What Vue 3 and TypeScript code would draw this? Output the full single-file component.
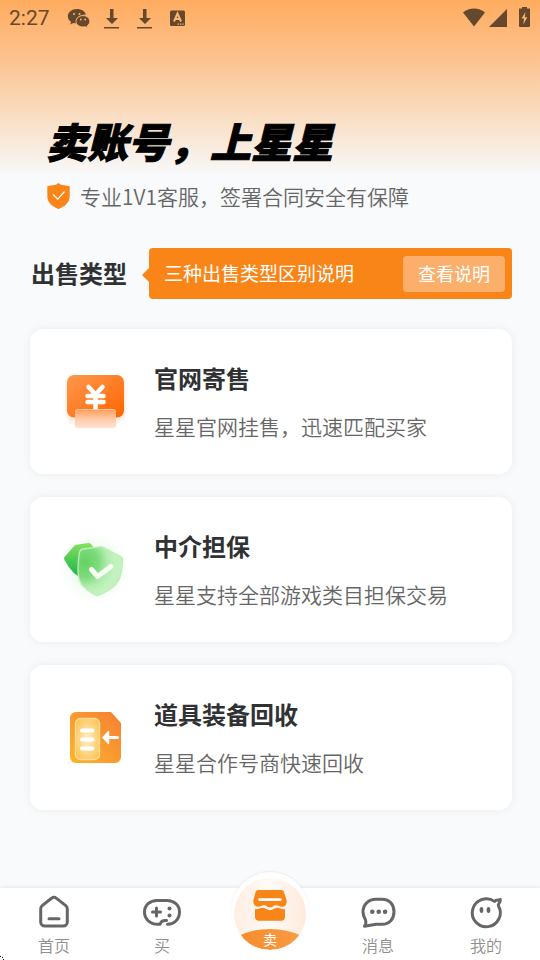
<script setup lang="ts">
type CardIcon = 'consign' | 'escrow' | 'recycle'

interface SellType {
  icon: CardIcon
  title: string
  desc: string
}

interface Tab {
  icon: 'home' | 'game' | 'sell' | 'chat' | 'me'
  label: string
}

const sellTypes: SellType[] = [
  { icon: 'consign', title: '官网寄售', desc: '星星官网挂售，迅速匹配买家' },
  { icon: 'escrow', title: '中介担保', desc: '星星支持全部游戏类目担保交易' },
  { icon: 'recycle', title: '道具装备回收', desc: '星星合作号商快速回收' },
]

const tabs: Tab[] = [
  { icon: 'home', label: '首页' },
  { icon: 'game', label: '买' },
  { icon: 'sell', label: '卖' },
  { icon: 'chat', label: '消息' },
  { icon: 'me', label: '我的' },
]
</script>

<template>
  <div class="page">
    <header class="status">
      <span class="time">2:27</span>
      <svg class="status-left" width="122" height="24" viewBox="0 0 122 24" aria-hidden="true">
        <g fill="#66492c">
          <path d="M10 3C4.800 3 .8 6.300.8 10.300c0 2.300 1.300 4.200 3.300 5.600L3.200 18.500l3.300-1.500c1 .3 2 .4 3.200.4-1.200-5 2.600-8.800 9.200-8.800C18 5.300 14.500 3 10 3z" />
          <path d="M16 9.600c-4 0-7 2.500-7 5.700s3 5.700 7 5.700c.9 0 1.700-.1 2.500-.3l2.400 1.200-.6-2.100c1.600-1.100 2.500-2.600 2.500-4.500 0-3.200-2.900-5.700-6.800-5.700z" stroke="#feb571" stroke-width="1" />
          <path d="M43 3h3.500v9H51l-6 6-6-6h4zM37 21h15v1.600H37zM76 3h3.500v9H84l-6 6-6-6h4zM70 21h15v1.600H70z" />
          <rect x="103" y="4.500" width="15" height="15.500" rx="1.500" />
        </g>
        <path d="M107 15.500l3.500-8 3.500 8M108.500 13h4" fill="none" stroke="#feb571" stroke-width="2" />
        <g fill="#feb571">
          <circle cx="7" cy="8" r="1" /><circle cx="12.500" cy="8" r="1" />
          <circle cx="13.800" cy="13.500" r=".9" /><circle cx="18.200" cy="13.500" r=".9" />
          <path d="M110.500 17.500h1.500v1.200h-1.500zM113 17.500h1.500v1.200H113zM115.500 17.500h1.200v1.200h-1.200z" />
        </g>
      </svg>
      <svg class="status-right" width="70" height="24" viewBox="0 0 70 24" aria-hidden="true">
        <g fill="#66492c">
          <path d="M2 6.500C8 1 18 1 24 6.500L13 20.500z" />
          <path d="M46 3v18H28z" />
          <path d="M61 1h5v1.500h3V20a1 1 0 0 1-1 1h-9a1 1 0 0 1-1-1V2.500h3z" />
        </g>
        <path d="M64.500 6l-4 6.500h2.600l-.8 6 4-7.300h-2.600z" fill="#feb571" />
      </svg>
    </header>

    <main class="main">
      <section class="hero">
        <h1 class="slogan">卖账号，上星星</h1>
        <p class="promise">
          <svg width="24" height="28" viewBox="0 0 24 28" aria-hidden="true">
            <path d="M12.500 1L15 2.700l8 1.300a.8.800 0 0 1 .7.800V14c0 6.500-4.700 10.300-11.200 13C6 24.300 1.300 20.500 1.300 14V4.800c0-.4.300-.7.7-.8l8-1.300z" fill="#f98518" />
            <path d="M7 12.500l4.700 4.700L18.500 9.500" fill="none" stroke="#fff" stroke-width="1.200" />
          </svg>
          <span>专业1V1客服，签署合同安全有保障</span>
        </p>
      </section>

      <section class="types">
        <div class="types-head">
          <h2 class="types-title">出售类型</h2>
          <div class="ribbon">
            <span class="ribbon-text">三种出售类型区别说明</span>
            <button type="button" class="ribbon-btn">查看说明</button>
          </div>
        </div>

        <a v-for="item in sellTypes" :key="item.title" class="card" href="#">
          <svg v-if="item.icon === 'consign'" class="card-icon" viewBox="0 0 84 84" aria-hidden="true">
            <defs>
              <linearGradient id="c-body" x1="0" y1="0" x2="1" y2="1">
                <stop offset="0" stop-color="#ff984e" /><stop offset="1" stop-color="#ff6500" />
              </linearGradient>
              <linearGradient id="c-slip" x1="0" y1="0" x2="0" y2="1">
                <stop offset="0" stop-color="#ff9a56" /><stop offset=".5" stop-color="#ffc9a5" /><stop offset="1" stop-color="#ffe3d2" />
              </linearGradient>
              <filter id="c-blur" x="-30%" y="-30%" width="160%" height="160%"><feGaussianBlur stdDeviation="2.500" /></filter>
            </defs>
            <rect x="13" y="20" width="57" height="40" rx="8" fill="#ffb284" opacity=".5" filter="url(#c-blur)" />
            <ellipse cx="40" cy="61" rx="26" ry="6" fill="#fff0e6" />
            <rect x="13" y="15" width="57" height="42.500" rx="7" fill="url(#c-body)" />
            <path d="M34.500 27l7 7.500 7-7.500M41.500 34.500V49M33.500 36h16M33.500 42h16" fill="none" stroke="#fff" stroke-width="4.500" stroke-linecap="round" />
            <rect x="21" y="49" width="41" height="19" rx="3" fill="url(#c-slip)" />
            <path d="M21.500 52c0-1.500 1-2.500 2.500-2.500h35c1.500 0 2.500 1 2.500 2.500" fill="none" stroke="#ffc89f" />
          </svg>

          <svg v-else-if="item.icon === 'escrow'" class="card-icon" viewBox="0 0 84 84" aria-hidden="true">
            <defs>
              <linearGradient id="e-back" x1=".6" y1="0" x2=".5" y2="1">
                <stop offset="0" stop-color="#83e35c" /><stop offset="1" stop-color="#1fb24f" />
              </linearGradient>
              <radialGradient id="e-front" cx=".16" cy=".32" r=".68">
                <stop offset="0" stop-color="#62d263" /><stop offset=".45" stop-color="#7edb7d" /><stop offset=".75" stop-color="#b3edb0" /><stop offset="1" stop-color="#c3f2bf" />
              </radialGradient>
              <radialGradient id="e-glow">
                <stop offset=".4" stop-color="#d3f5d2" /><stop offset="1" stop-color="#fff" stop-opacity="0" />
              </radialGradient>
            </defs>
            <circle cx="40" cy="40" r="41" fill="url(#e-glow)" opacity=".5" />
            <path d="M20 18q1-1 2.500-1.200L34 15q2.500-.3 3.500 1.500l5 8-14 25q-9-1-18-17.500-1-1.500 0-3z" fill="url(#e-back)" />
            <path d="M29 21l17-2.200q1.700-.2 3 .4l18 9.500q1.500.8 1.500 2.500C68 51 65 59 44 67.300q-1.700.7-3-.3C28 59.500 23.500 54 24 40.500c.2-6 .5-11 1.500-16 .4-2.300 1.500-3.200 3.500-3.500z" fill="url(#e-front)" stroke="#bdeeb9" stroke-width="1.300" />
            <path d="M37.500 41.500l6 7L57 38.500" fill="none" stroke="#f5fff4" stroke-width="5" stroke-linecap="round" stroke-linejoin="round" />
          </svg>

          <svg v-else class="card-icon" viewBox="0 0 84 84" aria-hidden="true">
            <defs>
              <linearGradient id="r-body" x1="0" y1="1" x2="1" y2="0">
                <stop offset="0" stop-color="#fdb52c" /><stop offset="1" stop-color="#f57f33" />
              </linearGradient>
              <radialGradient id="r-panel" cx=".5" cy=".5" r=".65">
                <stop offset="0" stop-color="#ffeec9" /><stop offset="1" stop-color="#fdc04b" />
              </radialGradient>
            </defs>
            <path d="M22 16h35l10 11v34a6 6 0 0 1-6 6H22a6 6 0 0 1-6-6V22a6 6 0 0 1 6-6z" fill="url(#r-body)" />
            <rect x="21.500" y="22.500" width="24" height="41" rx="5" fill="url(#r-panel)" stroke="#ffdc94" stroke-width="1.400" />
            <path d="M28 34.500h10.500M28 43.500h10.500M28 52.500h10.500" stroke="#fff" stroke-width="4" stroke-linecap="round" />
            <path d="M54.500 35.500v12L49 41.500z" fill="#fff" stroke="#fff" stroke-width="1.500" stroke-linejoin="round" />
            <path d="M54 41.500h9.500" stroke="#fff" stroke-width="3" stroke-linecap="round" />
          </svg>

          <span class="card-text">
            <strong class="card-title">{{ item.title }}</strong>
            <span class="card-desc">{{ item.desc }}</span>
          </span>
        </a>
      </section>
    </main>

    <nav class="tabbar" aria-label="主导航">
      <a v-for="tab in tabs" :key="tab.icon" href="#" class="tab" :class="{ 'tab-sell': tab.icon === 'sell' }">
        <svg v-if="tab.icon === 'home'" width="44" height="40" viewBox="0 0 44 40" class="line-icon" aria-hidden="true">
          <path d="M19.500 6.300a4 4 0 0 1 5 0l9.300 7.300a4 4 0 0 1 1.500 3.100V30a4 4 0 0 1-4 4H12.700a4 4 0 0 1-4-4V16.700a4 4 0 0 1 1.500-3.100z" />
          <path d="M17 26.800h10" />
        </svg>
        <svg v-else-if="tab.icon === 'game'" width="44" height="40" viewBox="0 0 44 40" class="line-icon" aria-hidden="true">
          <path d="M26.500 28.500C22.800 28 21.500 29 20.600 31l-.5 1.200h-2.600C10 32.200 4.500 27 4.500 20S10 8.500 17 8.500h10c7 0 12.500 4.500 12.500 11.500S34.500 32.200 27.500 32.200" />
          <path d="M16.500 16v8M12.500 20h8" />
          <g class="solid"><circle cx="29.500" cy="16.500" r="2" /><circle cx="29.500" cy="23.500" r="2" /></g>
        </svg>
        <svg v-else-if="tab.icon === 'chat'" width="44" height="40" viewBox="-1 0 44 40" class="line-icon" aria-hidden="true">
          <path d="M19 7.300h6c7.500 0 12 5.300 12 12.500s-4.500 12.500-12 12.500h-6l-11.500 2c1.500-2.500 2-4 1-6.300-1.500-2.500-2.500-5-2.500-8.200C6 12.600 11.500 7.300 19 7.300z" />
          <g class="solid"><circle cx="15.300" cy="19.700" r="2.300" /><circle cx="21.700" cy="19.700" r="2.300" /><circle cx="28.100" cy="19.700" r="2.300" /></g>
        </svg>
        <svg v-else-if="tab.icon === 'me'" width="44" height="40" viewBox="-1 0 44 40" class="line-icon" aria-hidden="true">
          <path d="M29.500 9.400A14 14 0 1 0 33.500 13.900C32.500 11.800 35.500 10.500 35.300 7.600C33.500 8.800 31.500 7.200 29.500 9.400" />
          <g class="solid"><ellipse cx="16.500" cy="18" rx="1.900" ry="2.900" /><ellipse cx="23.500" cy="18" rx="1.900" ry="2.900" /></g>
        </svg>
        <template v-else>
          <svg class="sell-badge" width="78" height="78" viewBox="0 0 78 78" aria-hidden="true">
            <defs>
              <linearGradient id="s-disc"><stop offset="0" stop-color="#ffeee2" /><stop offset=".25" stop-color="#fff4ec" /><stop offset=".5" stop-color="#fffaf6" /><stop offset="1" stop-color="#ffeadb" /></linearGradient>
              <linearGradient id="s-base"><stop offset="0" stop-color="#f68a28" /><stop offset="1" stop-color="#fa9d48" /></linearGradient>
              <clipPath id="s-clip"><circle cx="39" cy="42" r="36" /></clipPath>
            </defs>
            <circle cx="39" cy="42" r="36" fill="url(#s-disc)" />
            <ellipse cx="39" cy="79" rx="43" ry="22" fill="url(#s-base)" clip-path="url(#s-clip)" />
            <path d="M27.500 18h22.500c1.200 0 2.200.6 2.800 1.600l2.700 8.200c.8 4.200-1.500 7-4.500 7-2.500 0-3.500-1.500-6-1.500-2.600 0-3.500 2.300-6 2.300s-3.500-2.300-6-2.300-3.500 1.500-6 1.500c-3 0-5.300-3-4.500-7l2.200-8.200c.4-1 1.500-1.600 2.800-1.600z" fill="#f98518" />
            <path d="M24 37.300c3.500.4 5-1.500 8-1.500 2.800 0 4 2.400 7 2.400s4.200-2.400 7-2.400c3 0 4.500 1.900 8 1.500V45c0 2.300-1.500 3.800-3.800 3.800H27.800C25.500 48.800 24 47.300 24 45z" fill="#f98518" />
            <path d="M28.500 27.600h21" stroke="#fff" stroke-width="2.600" stroke-linecap="round" />
          </svg>
        </template>
        <span class="tab-label">{{ tab.label }}</span>
      </a>
    </nav>
    <svg class="corner" width="5" height="4" viewBox="0 0 5 4" aria-hidden="true">
      <path d="M0 0h1v1H0zM2 1h1v1H2zM3 3h1v1H3z" />
    </svg>
  </div>
</template>

<style>
body {
  margin: 0;
  background: #f8fafc;
}
</style>

<style scoped>
.page {
  position: relative;
  box-sizing: border-box;
  min-height: 100vh;
  display: flex;
  flex-direction: column;
  background: linear-gradient(#ffac5f 0, #fcc390 60px, #f9dfc6 120px, #f8f5f3 168px, #f8fafc 176px);
  color: #303133;
  font-family: "Noto Sans CJK SC", sans-serif;
}

.status {
  display: flex;
  align-items: center;
  height: 36px;
  padding: 0 9px;
  color: #66492c;
}

.time {
  width: 58px;
  font: 400 21px/36px Roboto, sans-serif;
}

.status-right {
  margin-left: auto;
}

.main {
  flex: 1;
  padding: 78px 28px 24px 30px;
}

.hero {
  padding: 0 16px;
}

.slogan {
  margin: 0;
  color: #000;
  font-size: 41px;
  font-style: italic;
  font-weight: 900;
  line-height: 52px;
  white-space: nowrap;
  -webkit-text-stroke: 1px #000;
}

.promise {
  display: flex;
  align-items: center;
  gap: 10px;
  margin: 15px 0 0;
  color: #666;
  font-size: 21px;
  font-weight: 350;
  line-height: 30px;
}

.types {
  display: flex;
  flex-direction: column;
  gap: 23px;
  margin-top: 37px;
}

.types-head {
  display: flex;
  align-items: center;
  gap: 22px;
  margin-bottom: 7px;
}

.types-title {
  margin: 0;
  padding: 0 0 2px 1px;
  font-size: 24px;
  font-weight: 700;
  line-height: 36px;
}

.ribbon {
  position: relative;
  flex: 1;
  display: flex;
  align-items: center;
  justify-content: space-between;
  height: 51px;
  box-sizing: border-box;
  padding: 0 7px 0 15px;
  border-radius: 4px;
  background: #f98518;
  color: #fff;
  font-size: 19px;
}

.ribbon-text {
  padding-bottom: 2px;
}

.ribbon::before {
  content: "";
  position: absolute;
  left: -7px;
  top: 20px;
  border: solid transparent;
  border-width: 7px 7px 7px 0;
  border-right-color: #f98518;
}

.ribbon-btn {
  height: 36px;
  padding: 0 15px 2px;
  border: 0;
  border-radius: 4px;
  background: #fbaf6b;
  color: #fff;
  font: inherit;
  font-size: 18px;
}

.card {
  display: flex;
  align-items: center;
  gap: 16px;
  box-sizing: border-box;
  min-height: 145px;
  padding: 0 24px;
  border-radius: 13px;
  background: #fff;
  box-shadow: 0 0 8px rgba(60, 80, 60, 0.08);
  color: inherit;
  text-decoration: none;
}

.card-icon {
  flex: none;
  width: 84px;
  height: 84px;
}

.card-text {
  display: flex;
  flex-direction: column;
  gap: 14px;
  padding-bottom: 2px;
}

.card-title {
  font-size: 24px;
  font-weight: 700;
  line-height: 36px;
}

.card-desc {
  color: #666;
  font-size: 21px;
  font-weight: 350;
  line-height: 32px;
}

.tabbar {
  position: sticky;
  bottom: 0;
  display: grid;
  grid-template-columns: repeat(5, 1fr);
  height: 72px;
  background: #fff;
  box-shadow: 0 -1px 4px rgba(0, 0, 0, 0.08);
}

.tab {
  position: relative;
  display: flex;
  flex-direction: column;
  align-items: center;
  padding-top: 4px;
  color: #909090;
  font-size: 16px;
  font-weight: 350;
  line-height: 26px;
  text-decoration: none;
}

.line-icon {
  fill: none;
  stroke: #666;
  stroke-width: 3;
  stroke-linecap: round;
  stroke-linejoin: round;
}

.line-icon .solid {
  fill: #666;
  stroke: none;
}

.tab-sell {
  justify-content: flex-end;
  padding: 0 0 8px;
  color: #fff;
  font-size: 14px;
  font-weight: 400;
}

.sell-badge {
  position: absolute;
  top: -16px;
  border-radius: 50%;
  background: #fff;
  box-shadow: 0 -1px 2px rgba(0, 0, 0, 0.06);
}

.tab-sell .tab-label {
  position: relative;
}

.corner {
  position: absolute;
  left: 0;
  bottom: 0;
}
</style>
